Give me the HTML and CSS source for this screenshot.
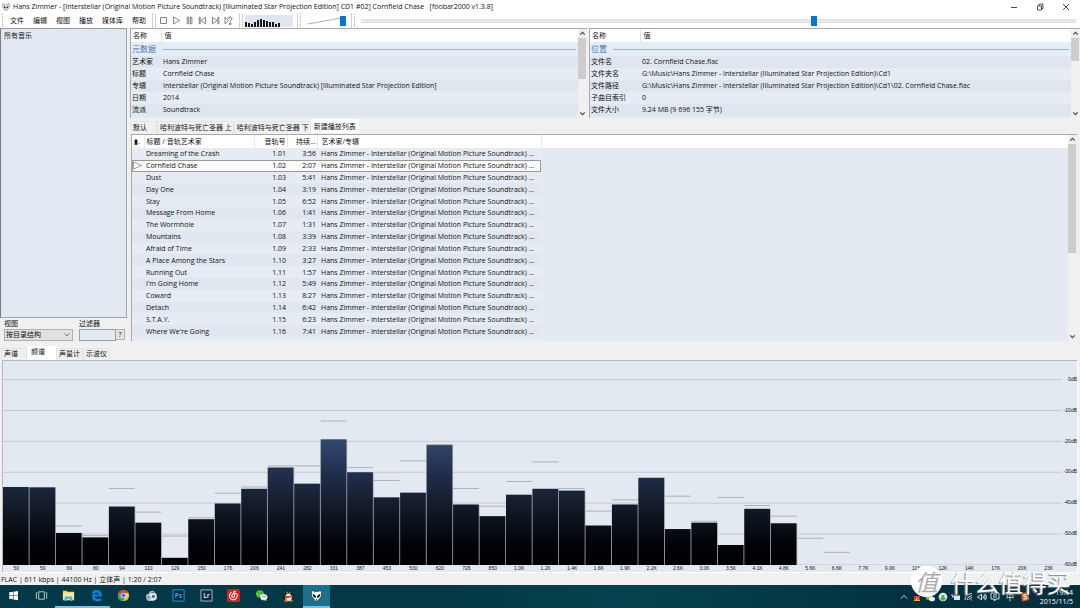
FILE: index.html
```html
<!DOCTYPE html>
<html lang="zh-CN">
<head>
<meta charset="utf-8">
<title>foobar2000</title>
<link rel="stylesheet" href="styles.css">
</head>
<body>
<header class="titlebar">
  <svg class="app-icon" viewBox="0 0 16 16"><path d="M3 1 5 4Q8 3 11 4L13 1 15 4 14 9 10 14Q8 16 6 14L2 9 1 4Z" fill="#eee" stroke="#555"/><path d="M3 6 7 8 7 11Q4 10 3 6ZM13 6 9 8 9 11Q12 10 13 6Z" fill="#111"/></svg>
  <h1 class="title">Hans Zimmer - [Interstellar (Original Motion Picture Soundtrack) [Illuminated Star Projection Edition] CD1 #02] Cornfield Chase &nbsp; [foobar2000 v1.3.8]</h1>
  <div class="window-controls">
    <button aria-label="最小化"><svg viewBox="0 0 8 8"><path d="M1 4.5H7"/></svg></button>
    <button aria-label="还原"><svg viewBox="0 0 8 8"><path d="M1.5 3H5.5V7H1.5ZM3 3V1.2H7V5.5H5.5"/></svg></button>
    <button aria-label="关闭"><svg viewBox="0 0 8 8"><path d="M1 1 7 7M7 1 1 7"/></svg></button>
  </div>
</header>

<div class="toolbar">
  <nav class="band menus">
    <button>文件</button><button>编辑</button><button>视图</button><button>播放</button><button>媒体库</button><button>帮助</button>
  </nav>
  <div class="band transport">
    <button aria-label="停止"><svg viewBox="0 0 9 9"><path d="M1.5 1.5H7.5V7.5H1.5Z"/></svg></button>
    <button aria-label="播放"><svg viewBox="0 0 9 9"><path d="M1.5 1 7.8 4.5 1.5 8Z"/></svg></button>
    <button aria-label="暂停"><svg viewBox="0 0 9 9"><path d="M2.2 1.2H3.7V7.8H2.2ZM5.4 1.2H6.9V7.8H5.4Z"/></svg></button>
    <button aria-label="上一曲"><svg viewBox="0 0 9 9"><path d="M1.2 1.2H2.2V7.8H1.2ZM7.5 1.2V7.8L3 4.5Z"/></svg></button>
    <button aria-label="下一曲"><svg viewBox="0 0 9 9"><path d="M7.8 1.2H6.8V7.8H7.8ZM1.5 1.2V7.8L6 4.5Z"/></svg></button>
    <button aria-label="随机播放"><svg viewBox="0 0 9 9"><path d="M1 1.2V7.8L4.5 4.5ZM3.5 2.5Q4.5 .5 6.3 .8 8.3 1.2 8 3 7.7 4.2 6.2 5.2V6.3M4.8 3Q5.2 2 6.2 2.2M5.5 7.2H7V8.4H5.5Z"/></svg></button>
  </div>
  <div class="band meter-band">
    <svg class="meter" viewBox="0 0 48 12"><path fill="#111820" d="M0 7H2V12H0ZM3 8H5V12H3ZM6 9H8V12H6ZM9 7H11V12H9ZM12 5H14V12H12ZM15 4H17V12H15ZM18 5H20V12H18ZM21 6H23V12H21ZM24 7H26V12H24ZM27 7H29V12H27ZM30 9H32V12H30ZM33 8H35V12H33Z"/></svg>
  </div>
  <div class="band volume-band">
    <input class="slider volume" type="range" aria-label="音量" value="98">
  </div>
  <div class="band seek-band">
    <input class="slider seek" type="range" aria-label="播放进度" min="0" max="1000" value="634">
  </div>
</div>

<main class="workspace">
  <aside class="sidebar">
    <div class="library">所有音乐</div>
    <form class="filters">
      <div class="field view-field"><label for="view">视图</label><select id="view"><option>按目录结构</option></select></div>
      <div class="field"><label for="filter">过滤器</label><div class="filter-line"><input id="filter" type="text"><button type="button">?</button></div></div>
    </form>
  </aside>

  <div class="content">
    <div class="properties">
      <section class="pane">
        <div class="pane-body">
          <table class="props">
            <thead><tr><th>名称</th><th>值</th></tr></thead>
            <tbody>
              <tr class="group"><td colspan="2"><div class="group-title">元数据</div></td></tr>
              <tr><td>艺术家</td><td>Hans Zimmer</td></tr>
              <tr><td>标题</td><td>Cornfield Chase</td></tr>
              <tr><td>专辑</td><td>Interstellar (Original Motion Picture Soundtrack) [Illuminated Star Projection Edition]</td></tr>
              <tr><td>日期</td><td>2014</td></tr>
              <tr><td>流派</td><td>Soundtrack</td></tr>
            </tbody>
          </table>
        </div>
        <div class="scrollbar"><svg viewBox="0 0 8 8"><path d="M2 5 4 3 6 5"/></svg><div class="track"><div class="thumb half"></div></div><svg viewBox="0 0 8 8"><path d="M2 3 4 5 6 3"/></svg></div>
      </section>
      <section class="pane location">
        <div class="pane-body">
          <table class="props wide">
            <thead><tr><th>名称</th><th>值</th></tr></thead>
            <tbody>
              <tr class="group"><td colspan="2"><div class="group-title">位置</div></td></tr>
              <tr><td>文件名</td><td>02. Cornfield Chase.flac</td></tr>
              <tr><td>文件夹名</td><td>G:\Music\Hans Zimmer - Interstellar (Illuminated Star Projection Edition)\Cd1</td></tr>
              <tr><td>文件路径</td><td>G:\Music\Hans Zimmer - Interstellar (Illuminated Star Projection Edition)\Cd1\02. Cornfield Chase.flac</td></tr>
              <tr><td>子曲目索引</td><td>0</td></tr>
              <tr><td>文件大小</td><td>9.24 MB (9 696 155 字节)</td></tr>
            </tbody>
          </table>
        </div>
        <div class="scrollbar"><svg viewBox="0 0 8 8"><path d="M2 5 4 3 6 5"/></svg><div class="track"><div class="thumb third"></div></div><svg viewBox="0 0 8 8"><path d="M2 3 4 5 6 3"/></svg></div>
      </section>
    </div>

    <div class="tabs playlist-tabs">
      <button>默认</button><button>哈利波特与死亡圣器 上</button><button>哈利波特与死亡圣器 下</button><button class="active">新建播放列表</button>
    </div>

    <section class="pane playlist">
      <div class="pane-body">
        <table class="tracks">
          <colgroup><col class="c-state"><col class="c-title"><col class="c-no"><col class="c-time"><col class="c-album"></colgroup>
          <thead><tr><th class="state-head">▮.</th><th>标题 / 音轨艺术家</th><th class="num">音轨号</th><th class="num">持续...</th><th>艺术家/专辑</th></tr></thead>
          <tbody id="tracks"></tbody>
        </table>
      </div>
      <div class="scrollbar"><svg viewBox="0 0 8 8"><path d="M2 5 4 3 6 5"/></svg><div class="track"><div class="thumb half"></div></div><svg viewBox="0 0 8 8"><path d="M2 3 4 5 6 3"/></svg></div>
    </section>
  </div>
</main>

<div class="tabs visual-tabs">
  <button>声谱</button><button class="active">频谱</button><button>声量计</button><button>示波仪</button>
</div>

<section class="spectrum">
  <svg id="plot" class="plot" viewBox="0 0 1060 203" preserveAspectRatio="none">
    <defs><linearGradient id="bar" gradientUnits="userSpaceOnUse" x1="0" y1="203" x2="0" y2="70"><stop offset="0" stop-color="#000"/><stop offset=".16" stop-color="#020306"/><stop offset=".4" stop-color="#101825"/><stop offset=".7" stop-color="#22304e"/><stop offset="1" stop-color="#364d79"/></linearGradient></defs>
  </svg>
  <div class="levels"><span>0dB</span><span>-10dB</span><span>-20dB</span><span>-30dB</span><span>-40dB</span><span>-50dB</span><span>-60dB</span></div>
  <div id="freqs" class="freqs"></div>
</section>

<footer class="status">FLAC | 611 kbps | 44100 Hz | 立体声 | 1:20 / 2:07</footer>

<div class="taskbar">
  <div class="apps">
    <button aria-label="开始"><svg viewBox="0 0 14 14"><path fill="#fff" d="M2.4 3.5 6.4 3V6.8H2.4ZM7 2.9 11.8 2.2V6.8H7ZM2.4 7.3H6.4V11.1L2.4 10.6ZM7 7.3H11.8V12L7 11.3Z"/></svg></button>
    <button aria-label="任务视图"><svg viewBox="0 0 14 14"><path fill="none" stroke="#d5e0e3" stroke-width=".9" d="M4 3H10V11H4ZM2.5 4H1.4V10H2.5M11.5 4H12.6V10H11.5"/></svg></button>
    <button class="open" aria-label="文件资源管理器"><svg viewBox="0 0 14 14"><path fill="#f5cf63" d="M1 2H5L6 3H13V12H1Z"/><path fill="#ffe99d" d="M1 4H13V11H1Z"/><path fill="#3db4e8" d="M3 8H11V13H9V10.5H5V13H3Z"/></svg></button>
    <button class="open" aria-label="Edge"><svg viewBox="0 0 14 14"><path fill="#0c7ee0" d="M1.2 6.6C1.8 2.8 4 1 7.2 1 11.5 1 13 4.4 12.7 8.2H5C5.2 10.8 9 11.5 12 9.8V12.3C8.5 14.2 2.6 13.3 2.4 8.5 2.3 6.3 3.6 4.7 5 4 3.5 4.4 2.2 5.2 1.2 6.6ZM5 6H9.3C9.3 3 5.3 3.2 5 6Z"/></svg></button>
    <button aria-label="Chrome"><svg viewBox="0 0 14 14"><circle cx="7" cy="7" r="6" fill="#f6cb2f"/><path fill="#de4436" d="M1.7 4.2A6 6 0 0 1 12.3 4.2L7 4.4 4.2 8Z"/><path fill="#36a657" d="M1.7 4.2A6 6 0 0 0 6.5 13L9.3 8.5 4.5 8.3Z"/><circle cx="7" cy="7" r="3" fill="#fff"/><circle cx="7" cy="7" r="2.3" fill="#3d7fe0"/></svg></button>
    <button aria-label="浏览器"><svg viewBox="0 0 14 14"><path fill="#a8b6c4" d="M1 8Q1 5 4 5 5 1 9 2L12 5Q13 8 12.5 11L9 13H3Q1 11 1 8Z"/><ellipse cx="8.5" cy="8" rx="4" ry="4" fill="#e4ebf1"/><path d="M3 9Q5 7 6 10M7 4H10" stroke="#4d6075" fill="none"/><circle cx="9" cy="8" r="1.8" fill="#59728d"/></svg></button>
    <button aria-label="Photoshop"><svg viewBox="0 0 14 14"><path fill="#062138" stroke="#19a9e0" d="M1 1H13V13H1Z"/><text class="adobe ps" x="7" y="9.5">Ps</text></svg></button>
    <button aria-label="Lightroom"><svg viewBox="0 0 14 14"><path fill="#0d2a3b" stroke="#a8c2cf" d="M1 1H13V13H1Z"/><text class="adobe" x="7" y="9.5">Lr</text></svg></button>
    <button aria-label="网易云音乐"><svg viewBox="0 0 14 14"><rect width="14" height="14" x="0" rx="2" fill="#d9201c"/><path fill="none" stroke="#fff" stroke-width="1.1" d="M5 3.5A4.2 4.2 0 1 0 10.5 5.2Q8.5 4 6.3 5.2 4.3 6.8 5.6 8.6 7.4 9.7 8.3 7.8L7.2 3.3Q7.6 1.8 9.4 2.7"/></svg></button>
    <button aria-label="微信"><svg viewBox="0 0 14 14"><path fill="#62c531" d="M1 5C1 0 9.5 0 9.5 5S5 9 4 8.5L2.3 9.4V7.8Q1 6.7 1 5Z"/><path fill="#e8eee9" d="M5.5 8.5C5.5 4.5 13.5 4.3 13.5 8.8Q13.3 10.3 12.2 11.2V12.8L10.5 12C8 12.5 5.5 11.5 5.5 8.5Z"/><path d="M3.5 4H4.5M6.5 4H7.5M8 8H9M10.5 8H11.5" stroke="#27552a"/></svg></button>
    <button aria-label="QQ"><svg viewBox="0 0 14 14"><path fill="#161a20" d="M3.5 6Q3 1 7 1T10.5 6L13 10 11 10.5H3L1 10Z"/><ellipse cx="7" cy="9" rx="3.6" ry="4" fill="#fff"/><path fill="#e22b20" d="M3 6.5Q7 8.5 11 6.5L11.5 8.3Q7 10 5.5 9.2V11H4Z"/><path fill="#f5a31c" d="M5 5Q7 4 9 5 7 6.5 5 5ZM2.5 12H6.5V13.5H2.5ZM7.5 12H11.5V13.5H7.5Z"/><path d="M5.5 2.8V4.2M8.5 2.8V4.2" stroke="#fff"/></svg></button>
    <button class="open current" aria-label="foobar2000"><svg viewBox="0 0 14 14"><path fill="#fff" stroke="#111" stroke-width=".6" d="M3 1 4.7 3Q7 2 9.3 3L11 1 12.5 4 12 8 9 12Q7 14 5 12L2 8 1.5 4Z"/><path fill="#111" d="M2.8 5 6.3 7.2V9.8Q3.2 9 2.8 5ZM11.2 5 7.7 7.2V9.8Q10.8 9 11.2 5ZM6 11H8L7 12Z"/></svg></button>
  </div>
  <div class="tray">
    <svg viewBox="0 0 10 10"><path d="M2 6.5 5 3.5 8 6.5" class="line"/></svg>
    <svg viewBox="0 0 10 10"><path fill="#20242a" d="M3 4Q3 1 5 1T7 4L9 8H1Z"/><path fill="#fff" d="M3 5H7V9H3Z"/><path fill="#ed3922" d="M2 4H8V6L4 7V9H2ZM5 7H8V9H5Z"/><path fill="#f5b030" d="M2 8H8V9H2Z"/></svg>
    <svg viewBox="0 0 10 10"><ellipse cx="4" cy="5" rx="3.5" ry="3" fill="#68c63b"/><ellipse cx="7" cy="7" rx="3" ry="2.3" fill="#eee"/></svg>
    <svg viewBox="0 0 10 10"><circle cx="5" cy="5" r="4.3" fill="#e9eee9"/><path fill="#37b74b" d="M1 6H3.5V3H6.5V6H9L5 9Z"/></svg>
    <svg viewBox="0 0 10 10"><path d="M3 3.5H9V8H3Z" class="solid"/><path d="M1 2V4H3M1 5H3" class="line"/></svg>
    <svg viewBox="0 0 10 10"><path d="M1 8Q1 2 8 1.5M3 8Q3.5 4 8 3.5M5 8Q5.5 6 8 5.5M7 8H8" class="line"/></svg>
    <svg viewBox="0 0 10 10"><path d="M1 4H2.5L4.5 2V8L2.5 6H1ZM6 3.5Q7 5 6 6.5M7.2 2.5Q9 5 7.2 7.5M8.4 1.7Q10.5 5 8.4 8.3" class="line"/></svg>
    <svg viewBox="0 0 10 10"><path d="M1 1H9V7H6L4.5 9V7H1ZM3 3H7M3 5H7" class="line"/></svg>
    <span class="ime">中</span>
    <svg viewBox="0 0 10 10"><path fill="#ef4b22" d="M1 1 8 0 9.5 8 2 9.5Z"/><path d="M7 3Q3.5 2 3.7 3.8C4 5 7 4.6 6.8 6Q6.3 7.5 3.5 6.7" fill="none" stroke="#fff" stroke-width="1.2"/></svg>
    <time class="clock">19:14<br>2015/11/5</time>
  </div>
</div>
<div class="watermark"><span class="badge">值</span><span class="brand">什么值得买</span></div>
<script src="app.js"></script>
</body>
</html>
```
FILE: styles.css
```css
* { box-sizing: border-box; }
body {
  margin: 0;
  height: 100vh;
  position: relative;
  overflow: hidden;
  display: flex;
  flex-direction: column;
  background: #f0f0f0;
  color: #111;
  font: 7px/10px "Open Sans", "Noto Sans CJK SC", sans-serif;
}
button, input, select { font: inherit; color: inherit; margin: 0; padding: 0; border: 0; border-radius: 0; background: none; }
svg { display: block; }
table { border-collapse: collapse; border-spacing: 0; }
th, td { padding: 0; font-weight: 400; text-align: left; white-space: nowrap; overflow: hidden; }

.titlebar { height: 13px; flex: none; display: flex; align-items: center; gap: 3px; padding-left: 2px; background: #fff; }
.app-icon { width: 8px; height: 8px; }
.title { flex: 1; margin: 0; font-size: 7px; font-weight: 400; line-height: 12px; white-space: nowrap; }
.window-controls { display: flex; gap: 18px; padding-right: 10px; }
.window-controls svg { width: 8px; height: 8px; fill: none; stroke: #222; stroke-width: 0.8; }

.toolbar { height: 15px; flex: none; display: flex; background: #fff; }
.band { display: flex; align-items: center; border-right: 1px solid #d0d0d0; margin-left: 2px; padding-left: 7px; position: relative; }
.band::before { content: ""; position: absolute; left: 0; top: 1px; bottom: 1px; border-left: 1px dotted #aaa; }
.menus { gap: 9px; padding: 0 6px 0 8px; }
.transport { gap: 4px; padding: 0 6px 0 4px; }
.transport svg { width: 9px; height: 9px; fill: none; stroke: #555; stroke-width: 0.7; }
.meter-band { padding: 0 4px 0 3px; }
.meter { width: 48px; height: 12px; background: #dfe6ef; }
.volume-band { padding: 0 4px 0 7px; }
.seek-band { flex: 1; border: 0; padding: 0 4px 0 7px; }
.slider { appearance: none; height: 12px; display: block; }
.slider::-webkit-slider-runnable-track { height: 12px; }
.slider::-webkit-slider-thumb { appearance: none; width: 6px; height: 10px; margin-top: 1px; background: #0078d7; }
.volume { width: 40px; background: url("data:image/svg+xml,%3Csvg xmlns='http://www.w3.org/2000/svg' viewBox='0 0 34 8'%3E%3Cpath d='M1 7 34 1' fill='none' stroke='%23999' stroke-width='.8'/%3E%3C/svg%3E") 0 2px / 34px 8px no-repeat; }
.seek { width: 100%; background: linear-gradient(#d6dadb, #e7eaea 1px, #e7eaea 3px, #d6dadb 4px) 0 4px / 100% 4px no-repeat; }

.workspace { flex: 315 1 0; min-height: 0; display: flex; gap: 3px; }
.sidebar { width: 127px; flex: none; display: flex; flex-direction: column; }
.library { flex: 1; padding: 2px 3px; background: #e3e9f2; border: 1px solid #a0a5b0; border-left: 1px solid #777d88; border-top: 1px solid #999; }
.filters { height: 24px; flex: none; display: flex; gap: 6px; padding-left: 4px; }
.field { display: flex; flex-direction: column; }
.field label { line-height: 11px; }
.view-field { width: 69px; }
.field select { appearance: none; height: 12px; padding: 0 1px; line-height: 10px; border: 1px solid #b0b0b0; background: url("data:image/svg+xml,%3Csvg xmlns='http://www.w3.org/2000/svg' viewBox='0 0 6 4'%3E%3Cpath d='M0.5 0.5 3 3 5.5 0.5' fill='none' stroke='%23555' stroke-width='.8'/%3E%3C/svg%3E") right 2px center / 6px 4px no-repeat #e1e1e1; }
.filter-line { display: flex; }
.filter-line input { width: 37px; height: 12px; border: 1px solid #9aa0aa; background: #e3e9f2; }
.filter-line button { width: 9px; height: 11px; line-height: 9px; border: 1px solid #b0b0b0; border-left: 0; background: #e5e5e5; }

.content { flex: 1; min-width: 0; display: flex; flex-direction: column; }
.properties { height: 90px; flex: none; display: grid; grid-template-columns: 457fr 491fr; gap: 2px; }
.pane { display: flex; min-width: 0; min-height: 0; border-top: 1px solid #aaa; border-left: 1px solid #aaa; background: #e3e9f1; }
.pane-body { flex: 1; min-width: 0; overflow: hidden; background: linear-gradient(#fff 13px, #e3eaf2 13px); }
.props { width: 100%; table-layout: fixed; }
.props th { height: 13px; padding-left: 2px; }
.props th:first-child { width: 30px; border-right: 1px solid #e2e2e2; }
.props.wide th:first-child { width: 50px; }
.props th + th { padding-left: 3px; }
.props td { height: 12px; padding-left: 1px; }
.props td + td { padding-left: 2px; }
.props .group td { height: 14px; }
.props tr:nth-child(even) { background: #dfe6ef; }
.props tr:nth-child(odd) { background: #e5ecf4; }
.props thead tr:nth-child(odd) { background: #fff; }
.group-title { display: flex; align-items: center; gap: 6px; font-size: 8px; line-height: 12px; color: #4a78bd; }
.group-title::after { content: ""; flex: 1; height: 1px; margin-right: 2px; background: #9cb4d8; }

.scrollbar { width: 9px; flex: none; display: flex; flex-direction: column; background: #f0f0f0; }
.scrollbar svg { width: 9px; height: 9px; flex: none; fill: none; stroke: #444; stroke-width: 1; }
.track { flex: 1; padding-right: 1px; }
.thumb { background: #cdcdcd; }
.half { height: 58%; }
.third { height: 32%; }

.tabs { flex: none; display: flex; align-items: flex-end; }
.tabs button { height: 12px; padding: 0 2px; border: 1px solid #e4e4e4; border-bottom: 0; line-height: 10px; white-space: nowrap; }
.tabs .active { height: 14px; background: #fff; border-color: #fff; }
.playlist-tabs { height: 16px; padding-left: 1px; padding-bottom: 1px; }
.playlist-tabs button { padding: 0 1px 0 2px; }
.playlist-tabs button:first-child { padding: 0 9px 0 1px; }
.playlist-tabs .active { padding: 0 2px; }
.visual-tabs { height: 18px; padding-left: 1px; }
.visual-tabs button:first-child { padding: 0 8px 0 2px; }
.visual-tabs .active { padding: 0 10px 2px 3px; }

.playlist { flex: 1; margin: 0 3px 1px 1px; }
.tracks { width: 409px; height: 214px; table-layout: fixed; }
.c-state { width: 12px; }
.c-title { width: 110px; }
.c-no { width: 33px; }
.c-time { width: 30px; }
.c-album { width: 224px; }
.tracks th { height: 13px; line-height: 10px; border-right: 1px solid #e8e8e8; background: #fff; }
.tracks th, .tracks td { padding-left: 2px; }
.tracks td { line-height: 9px; }
.tracks .num { padding: 0 1px 0 0; text-align: right; }
.tracks th:last-child, .tracks td:last-child { padding-left: 4px; }
.tracks tbody tr:nth-child(even) { background: #e0e7f0; }
.tracks tbody tr:nth-child(odd) { background: #e5ecf4; }
.tracks tbody tr.playing:nth-child(n) { background: #fafafa; outline: 1px solid #999; outline-offset: -1px; }
.tracks td:first-child { padding: 0; }
.tracks td svg { width: 11px; height: 9px; fill: #fff; stroke: #777; stroke-width: 0.7; }

.spectrum { flex: 212 1 0; min-height: 0; margin: 0 2px 1px; display: grid; grid-template: minmax(0, 1fr) 7px / minmax(0, 1fr) 15px; border: 1px solid #b5b9bf; border-right-color: #fff; border-bottom-color: #fff; background: #e3e9f1; font: 5px/7px "Liberation Sans", sans-serif; }
.plot { width: 100%; height: 100%; }
.levels { grid-row: 1 / 3; grid-column: 2; display: flex; flex-direction: column; justify-content: space-between; align-items: flex-end; padding: 15px 0 4px; }
.freqs { grid-row: 2; grid-column: 1; display: grid; grid-template-columns: repeat(40, 1fr); text-align: center; }

.status { height: 11px; flex: none; padding-left: 1px; line-height: 11px; }
.taskbar { height: 23px; flex: none; display: flex; justify-content: space-between; background: linear-gradient(90deg, #033846, #033846 40%, #04444f 58%, #03303f 85%); }
.apps { width: 330px; display: flex; }
.apps button { flex: 1; display: grid; place-items: center; border-bottom: 2px solid transparent; }
.apps svg { width: 13px; height: 13px; }
.apps .open { border-bottom-color: #76c3e6; }
.apps .current { background: #1a718d; }
.adobe { font: bold 7px "Open Sans", sans-serif; text-anchor: middle; fill: #c7dbe5; }
.ps { fill: #28b6ee; }
.tray { display: flex; align-items: center; gap: 3px; padding-right: 7px; color: #fff; }
.tray svg { width: 10px; height: 10px; }
.line { fill: none; stroke: #e6eef0; stroke-width: 0.9; }
.solid { fill: #dbe5e7; }
.ime { width: 14px; font-size: 8px; text-align: center; }
.clock { width: 40px; text-align: right; line-height: 9px; }

.watermark { position: absolute; right: 9px; bottom: 11px; display: flex; align-items: center; gap: 9px; color: #fff; font-family: "Noto Sans CJK SC", sans-serif; pointer-events: none; }
.badge { width: 31px; height: 31px; border-radius: 50%; background: #fff; color: #aaa; font-size: 23px; line-height: 30px; text-align: center; font-style: italic; }
.brand { font-size: 24px; line-height: 31px; text-shadow: -1px 1px 1px #888; }
```
FILE: app.js
```js
const tracks = [
  ["Dreaming of the Crash", "1.01", "3:56"],
  ["Cornfield Chase", "1.02", "2:07"],
  ["Dust", "1.03", "5:41"],
  ["Day One", "1.04", "3:19"],
  ["Stay", "1.05", "6:52"],
  ["Message From Home", "1.06", "1:41"],
  ["The Wormhole", "1.07", "1:31"],
  ["Mountains", "1.08", "3:39"],
  ["Afraid of Time", "1.09", "2:33"],
  ["A Place Among the Stars", "1.10", "3:27"],
  ["Running Out", "1.11", "1:57"],
  ["I'm Going Home", "1.12", "5:49"],
  ["Coward", "1.13", "8:27"],
  ["Detach", "1.14", "6:42"],
  ["S.T.A.Y.", "1.15", "6:23"],
  ["Where We're Going", "1.16", "7:41"],
  ["First Step", "2.01", "1:48"]
];
const playing = 1;
const album = "Hans Zimmer - Interstellar (Original Motion Picture Soundtrack) ...";
const arrow = '<svg viewBox="0 0 11 9"><path d="M1.5 1 9.5 4.5 1.5 8Z"/></svg>';
document.getElementById("tracks").innerHTML = tracks.map(([title, no, time], i) =>
  `<tr class="${i === playing ? "playing" : ""}"><td>${i === playing ? arrow : ""}</td><td>${title}</td><td class="num">${no}</td><td class="num">${time}</td><td>${album}</td></tr>`
).join("");

// Band label, level and held peak, both in percent of the plot height.
const bands = [
  ["50", 38.3], ["59", 38.1], ["69", 15.8, 19.2], ["80", 13.6, 14.5], ["94", 28.7, 37.6],
  ["110", 20.8, 26], ["129", 3.6, 14.3], ["150", 22.5, 23.2], ["176", 30.2, 35.3], ["206", 37.4, 38.3],
  ["241", 47.8, 48.6], ["282", 39.9, 48.6], ["331", 61.6, 70.6], ["387", 45.5, 47.8], ["453", 33.2, 41.5],
  ["530", 35.5, 51.1], ["620", 58.8, 59.1], ["726", 29.7, 37.6], ["850", 24, 28.9], ["1.0K", 34.5, 41],
  ["1.2K", 37.4, 50.6], ["1.4K", 36.5, 37.6], ["1.6K", 19.4, 26.5], ["1.9K", 29.7, 32], ["2.2K", 42.7, 42.9],
  ["2.6K", 17.7, 33.8], ["3.0K", 20.8, 21.5], ["3.5K", 9.9, 33.2], ["4.1K", 27.6, 29.2], ["4.8K", 20.5, 24],
  ["5.6K", 0, 13.2], ["6.6K", 0, 6.3], ["7.7K", 0], ["9.0K", 0], ["11K", 0],
  ["12K", 0], ["14K", 0], ["17K", 0], ["20K", 0], ["23K", 0]
];
const height = 203;
const step = 26.5;
let shapes = "";
for (let i = 0; i < 7; i++) {
  shapes += `<rect x="0" y="${18 + i * 30.7}" width="1060" height="1" fill="#c6cbd3"/>`;
}
bands.forEach(([, level, peak], i) => {
  const x = i * step;
  const h = level * height / 100;
  if (peak) shapes += `<rect x="${x}" y="${height - peak * height / 100 - 0.5}" width="26" height="1" fill="#aeb2b9"/>`;
  if (h) {
    shapes += `<rect x="${x}" y="${height - h}" width="${step}" height="${h}" fill="#a3a8b0"/>`;
    shapes += `<rect x="${x}" y="${height - h}" width="25.7" height="${h}" fill="url(#bar)"/>`;
  }
});
document.getElementById("plot").insertAdjacentHTML("beforeend", shapes);
document.getElementById("freqs").innerHTML = bands.map(([name]) => `<span>${name}</span>`).join("");
```
